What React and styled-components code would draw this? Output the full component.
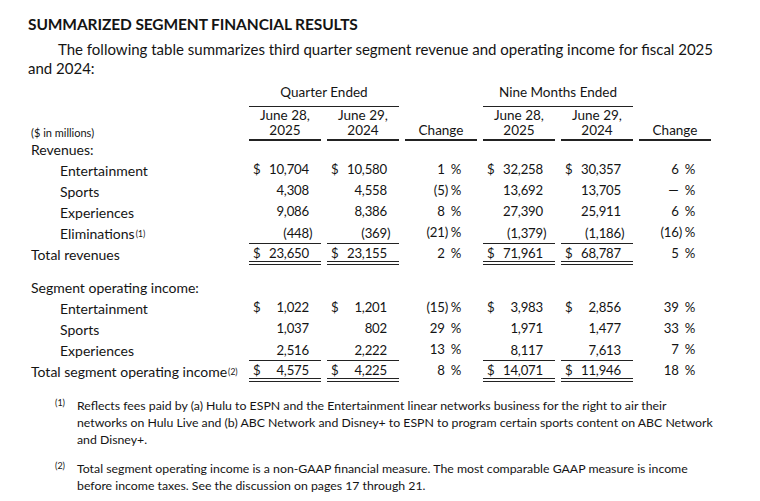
import React from "react";
import styled, { createGlobalStyle } from "styled-components";

const GlobalStyle = createGlobalStyle`
  html, body { margin: 0; padding: 0; background: #ffffff; }
  body { font-family: Lato, "Open Sans", "Liberation Sans", sans-serif; color: #141414; }
`;

const Page = styled.div`
  width: 760px;
  height: 501px;
  box-sizing: border-box;
  padding: 14px 0 0 28px;
  overflow: hidden;
`;

const Title = styled.h1`
  margin: 0;
  font-size: 15.5px;
  line-height: 20px;
  font-weight: 700;
  letter-spacing: -0.1px;
`;

const Intro = styled.p`
  margin: 6px 0 0 0;
  font-size: 15px;
  line-height: 19px;
  text-indent: 30px;
  white-space: nowrap;
`;

const Table = styled.div`
  margin-top: 5px;
  font-size: 14px;
`;

const Row = styled.div`
  display: grid;
  grid-template-columns: 215px repeat(6, 72px);
  column-gap: 6px;
  height: ${(p) => p.$h || 21}px;
  align-items: stretch;
`;

const GroupHead = styled.div`
  grid-column: span 2;
  text-align: center;
  border-bottom: 1.5px solid #222;
  line-height: 19px;
  font-size: 13.5px;
`;

const Blank = styled.div``;

const ColHead = styled.div`
  display: flex;
  align-items: flex-end;
  justify-content: center;
  text-align: center;
  line-height: 15px;
  padding-bottom: 1px;
  border-bottom: 2px solid #222;
  font-size: 13.5px;
`;

const UnitLabel = styled.div`
  display: flex;
  align-items: flex-end;
  padding: 0 0 2px 3px;
  font-size: 11px;
  line-height: 13px;
`;

const Label = styled.div`
  display: flex;
  align-items: center;
  padding-left: ${(p) => (p.$indent ? 32 : 3)}px;
  padding-bottom: ${(p) => (p.$section ? 4 : 0)}px;
  white-space: nowrap;
`;

const ruleStyle = (rule) =>
  rule === "single"
    ? "border-bottom: 1.5px solid #222;"
    : rule === "double"
    ? "border-bottom: 4px double #222;"
    : "border-bottom: 3px solid transparent;";

const Amount = styled.div`
  display: flex;
  align-items: center;
  justify-content: space-between;
  padding: 0 12px 0 4px;
  box-sizing: border-box;
  font-size: 13.2px;
  letter-spacing: -0.2px;
  ${(p) => ruleStyle(p.$rule)}
`;

const Paren = styled.span`
  display: inline-block;
  width: 0;
  overflow: visible;
`;

const Pct = styled.div`
  display: flex;
  align-items: center;
  justify-content: flex-end;
  padding-right: 16px;
  font-size: 13.2px;
  letter-spacing: -0.2px;
  border-bottom: 3px solid transparent;
`;

const PctSign = styled.span`
  margin-left: 6px;
`;

const Sup = styled.sup`
  font-size: 8.5px;
  line-height: 0;
  vertical-align: 6px;
  margin-left: 1px;
`;

const Spacer = styled.div`
  height: 14px;
`;

const Notes = styled.div`
  margin-top: 15px;
  display: flex;
  flex-direction: column;
  gap: 12px;
`;

const Note = styled.div`
  display: grid;
  grid-template-columns: 49px auto;
  font-size: 12.3px;
  line-height: 17px;
  white-space: nowrap;
`;

const NoteMark = styled.div`
  padding-left: 27px;
  font-size: 9px;
  line-height: 11px;
`;

function splitNum(v) {
  if (v.startsWith("(")) return { body: v.slice(0, -1), close: ")" };
  return { body: v, close: "" };
}

function AmountCell({ value, dollar, rule }) {
  const { body, close } = splitNum(value);
  return (
    <Amount $rule={rule}>
      <span>{dollar ? "$" : ""}</span>
      <span>
        {body}
        <Paren>{close}</Paren>
      </span>
    </Amount>
  );
}

function PctCell({ value }) {
  const { body, close } = splitNum(value);
  return (
    <Pct>
      <span>
        {body}
        <Paren>{close}</Paren>
      </span>
      <PctSign>%</PctSign>
    </Pct>
  );
}

function DataRow({ label, sup, indent, vals, dollar, rule }) {
  return (
    <Row>
      <Label $indent={indent}>
        {label}
        {sup && <Sup>({sup})</Sup>}
      </Label>
      <AmountCell value={vals[0]} dollar={dollar} rule={rule} />
      <AmountCell value={vals[1]} dollar={dollar} rule={rule} />
      <PctCell value={vals[2]} />
      <AmountCell value={vals[3]} dollar={dollar} rule={rule} />
      <AmountCell value={vals[4]} dollar={dollar} rule={rule} />
      <PctCell value={vals[5]} />
    </Row>
  );
}

const revenues = [
  { label: "Entertainment", vals: ["10,704", "10,580", "1", "32,258", "30,357", "6"], dollar: true },
  { label: "Sports", vals: ["4,308", "4,558", "(5)", "13,692", "13,705", "—"] },
  { label: "Experiences", vals: ["9,086", "8,386", "8", "27,390", "25,911", "6"] },
  { label: "Eliminations", sup: 1, vals: ["(448)", "(369)", "(21)", "(1,379)", "(1,186)", "(16)"], rule: "single" },
];

const income = [
  { label: "Entertainment", vals: ["1,022", "1,201", "(15)", "3,983", "2,856", "39"], dollar: true },
  { label: "Sports", vals: ["1,037", "802", "29", "1,971", "1,477", "33"] },
  { label: "Experiences", vals: ["2,516", "2,222", "13", "8,117", "7,613", "7"], rule: "single" },
];

function HeadPair() {
  return (
    <>
      <ColHead>
        June 28,
        <br />
        2025
      </ColHead>
      <ColHead>
        June 29,
        <br />
        2024
      </ColHead>
      <ColHead>Change</ColHead>
    </>
  );
}

export default function App() {
  return (
    <>
      <GlobalStyle />
      <Page>
        <Title>SUMMARIZED SEGMENT FINANCIAL RESULTS</Title>
        <Intro>
          The following table summarizes third quarter segment revenue and operating income for fiscal 2025
          <br />
          and 2024:
        </Intro>
        <Table>
          <Row $h={24}>
            <Blank />
            <GroupHead>Quarter Ended</GroupHead>
            <Blank />
            <GroupHead>Nine Months Ended</GroupHead>
            <Blank />
          </Row>
          <Row $h={34}>
            <UnitLabel>($ in millions)</UnitLabel>
            <HeadPair />
            <HeadPair />
          </Row>
          <Row $h={19}>
            <Label $section>Revenues:</Label>
          </Row>
          {revenues.map((r) => (
            <DataRow key={r.label} indent {...r} />
          ))}
          <DataRow label="Total revenues" vals={["23,650", "23,155", "2", "71,961", "68,787", "5"]} dollar rule="double" />
          <Spacer />
          <Row $h={19}>
            <Label $section>Segment operating income:</Label>
          </Row>
          {income.map((r) => (
            <DataRow key={r.label} indent {...r} />
          ))}
          <DataRow
            label="Total segment operating income"
            sup={2}
            vals={["4,575", "4,225", "8", "14,071", "11,946", "18"]}
            dollar
            rule="double"
          />
        </Table>
        <Notes>
          <Note>
            <NoteMark>(1)</NoteMark>
            <div>
              Reflects fees paid by (a) Hulu to ESPN and the Entertainment linear networks business for the right to air their
              <br />
              networks on Hulu Live and (b) ABC Network and Disney+ to ESPN to program certain sports content on ABC Network
              <br />
              and Disney+.
            </div>
          </Note>
          <Note>
            <NoteMark>(2)</NoteMark>
            <div>
              Total segment operating income is a non-GAAP financial measure. The most comparable GAAP measure is income
              <br />
              before income taxes. See the discussion on pages 17 through 21.
            </div>
          </Note>
        </Notes>
      </Page>
    </>
  );
}
